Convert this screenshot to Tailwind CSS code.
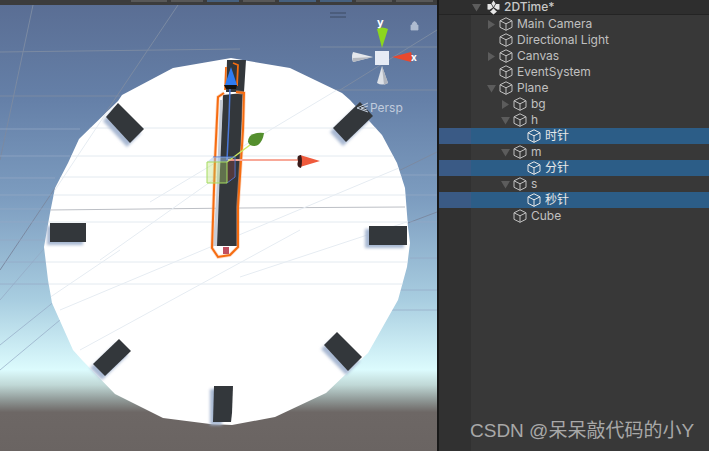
<!DOCTYPE html>
<html><head><meta charset="utf-8"><script src="https://cdn.jsdelivr.net/npm/@tailwindcss/browser@4"></script></head>
<body class="m-0 bg-[#383838]">
<svg width="0" height="0" class="absolute"><defs>
<symbol id="cube" viewBox="0 0 14 14"><path d="M7 .8 13 3.8V10.300L7 13.300 1 10.300V3.800ZM1 3.800 7 6.800 13 3.800M7 6.800V13.300" fill="none" stroke="currentColor" stroke-width="1" stroke-linejoin="round"/></symbol>
<symbol id="tr" viewBox="0 0 9 9"><path d="M1 0 8 4.500 1 9Z" fill="#5c5c5c"/></symbol>
<symbol id="td" viewBox="0 0 9 9"><path d="M0 1H9L4.500 8.500Z" fill="#5c5c5c"/></symbol>
<filter id="soft" x="-20%" y="-20%" width="140%" height="140%"><feGaussianBlur stdDeviation="1.500"/></filter>
<clipPath id="plate"><path d="M231 58 173 68 122 95 118 101 79 139 68 163 55 188 50 213 44 247 48 280 52 303 73 350 82 360 115 394 163 418 210 424 232 425 275 417 326 393 368 353 398 300 407 267 410 243 408 227 405 188 397 163 382 135 350 100 342 93 290 68Z"/></clipPath>
</defs></svg>
<div class="relative flex w-[709px] h-[451px] overflow-hidden font-['Inter','Noto_Sans_CJK_SC',sans-serif] text-[12px] leading-4 text-[#c0c0c0]">
  <!-- Scene view -->
  <div class="w-[437px] h-full shrink-0 flex flex-col">
    <div class="h-[5px] bg-[#3c3c3c] flex gap-[4px] pl-[131px] shrink-0">
      <div class="w-[36px] h-[2px] bg-[#585858]"></div>
      <div class="w-[32px] h-[2px] bg-[#585858]"></div>
      <div class="w-[32px] h-[2px] bg-[#46607e]"></div>
      <div class="w-[32px] h-[2px] bg-[#585858]"></div>
      <div class="w-[37px] h-[2px] bg-[#46607e]"></div>
      <div class="w-[32px] h-[2px] bg-[#46607e]"></div>
      <div class="w-[36px] h-[2px] bg-[#585858]"></div>
      <div class="w-[37px] h-[2px] bg-[#585858]"></div>
    </div>
    <svg width="437" height="446" viewBox="0 5 437 446" class="block">
      <defs>
        <linearGradient id="sky" x1="0" y1="5" x2="0" y2="451" gradientUnits="userSpaceOnUse">
          <stop offset="0" stop-color="#5a6e94"/><stop offset=".213" stop-color="#6580a8"/><stop offset=".437" stop-color="#7d9dc0"/><stop offset=".661" stop-color="#a8cde0"/><stop offset=".818" stop-color="#dcfbfd"/><stop offset=".852" stop-color="#c0d8d6"/><stop offset=".886" stop-color="#8f9896"/><stop offset=".913" stop-color="#6d6765"/><stop offset="1" stop-color="#6a6462"/>
        </linearGradient>
      </defs>
      <rect x="0" y="5" width="437" height="446" fill="url(#sky)"/>
      <g stroke="#7b8aa2" stroke-width="1" fill="none">
        <path d="M0 52 240 49M320 47H437M0 96H120M320 90H437M33 5 0 160M178 5 0 270M437 30 340 90M437 152 380 180M437 212 400 226"/>
      </g>
      <g stroke="#94a9c4" stroke-width="1" fill="none" opacity=".7">
        <path d="M0 129H80M0 156H70M0 178H55M0 195H52M0 209H52M0 222H50M0 240H46M0 262H46M0 284H50M400 175H437M405 195H437M410 222H437M410 258H437M400 290H437M390 310H437M60 230 0 300M75 285 0 345M60 320 0 370"/>
      </g>
      <path d="M231 58 173 68 122 95 118 101 79 139 68 163 55 188 50 213 44 247 48 280 52 303 73 350 82 360 115 394 163 418 210 424 232 425 275 417 326 393 368 353 398 300 407 267 410 243 408 227 405 188 397 163 382 135 350 100 342 93 290 68Z" fill="#fff"/>
      <g clip-path="url(#plate)" fill="none">
        <path d="M80 128H437M68 156H400M56 177H405M52 195H405M49 222H408M46 262H408M48 284H405" stroke="#e3eaf0"/>
        <path d="M48 210 240 208 405 207" stroke="#bcbfc5"/>
        <path d="M178 5 53 193M437 30 150 202M437 152 60 310M437 212 240 277M213 180 100 260M120 250 46 300M300 230 80 350" stroke="#e6ecf2"/>
      </g>
      <g fill="#a8b8d2" filter="url(#soft)">
        <path d="M115 107 141 133 127 147 103 121Z"/><path d="M47 226H83V245H47Z"/><path d="M116 343 128 355 102 380 90 368Z"/><path d="M335 336 360 361 346 375 321 349Z"/><path d="M330 132 357 106 370 120 343 146Z"/><path d="M210 389H222V425H210Z"/><path d="M365 229H404V248H365Z"/>
      </g>
      <g fill="#33373b">
        <path d="M118 103 144 129 130 143 106 117Z"/>
        <path d="M360 102 373 116 346 142 333 128Z"/>
        <path d="M50 223H86V242H50Z"/>
        <path d="M369 226H407V245H369Z"/>
        <path d="M119 339 131 351 105 376 93 364Z"/>
        <path d="M337 332 362 357 348 371 324 345Z"/>
        <path d="M214 386H233L232 413 231 422H213Z"/>
        <path d="M227 60H246L244 92H226Z"/>
      </g>
      <!-- hand -->
      <path d="M223 95 243 93 240 170 237 246H216L219 170Z" fill="#33373b"/>
      <path d="M220 100 216 200 213 246H217L220 170 223 100Z" fill="#c6ccd6"/>
      <path d="M224 93 218 97 215 160 212 248 218 257 230 255 238 247 238 207 243 130 244 93 236 92" fill="none" stroke="#f9b58e" stroke-width="3.500" opacity=".5"/>
      <path d="M224 93 218 97 215 160 212 248 218 257 230 255 238 247 238 207 243 130 244 93 236 92" fill="none" stroke="#f66c10" stroke-width="2"/>
      <path d="M223 247H229V254H223Z" fill="#c05060"/>
      <path d="M226 67 225 90M233 63 238 65 237 86" fill="none" stroke="#f66c10" stroke-width="1.800"/>
      <path d="M230 88 229 120 227 160" stroke="#4a78d8" stroke-width="1.500" fill="none"/>
      <path d="M231 67 237 85H225Z" fill="#2f7cf2"/><path d="M224 85H237L236 89H226Z" fill="#111"/>
      <!-- move gizmo -->
      <path d="M228 160H300" stroke="#f8a898" stroke-width="2"/>
      <path d="M227 162 250 145" stroke="#cbe860" stroke-width="1.500"/>
      <path d="M300 155 320 161 300 167Z" fill="#ef5a3c"/><path d="M301 155Q296 155 298 161 296 167 301 168 303 161 301 155Z" fill="#3a1a18"/>
      <path d="M264 133Q255 132 250 136 246 142 250 145 254 147 258 145 263 141 264 133Z" fill="#548f2e"/>
      <path d="M213 157H235V177L227 183" fill="none" stroke="#4a78d8"/>
      <path d="M235 158V177L227 183V162Z" fill="#b04040" fill-opacity=".25"/>
      <path d="M207 162 213 157H232L227 162Z" fill="#a8c8f0" fill-opacity=".5"/>
      <path d="M207 162H227V183H207Z" fill="#b8e070" fill-opacity=".35" stroke="#a5dc60" stroke-width="1"/>
      <!-- orientation gizmo -->
      <path d="M377 29Q382 26 388 29L382 48Z" fill="#8cd61e"/>
      <path d="M353 52 373 57 353 62Q351 57 353 52Z" fill="#e4e7ec"/><path d="M353 58 373 57 353 62Z" fill="#b4b8c0"/>
      <path d="M411 52 392 57 411 62Q413 57 411 52Z" fill="#e9492e"/>
      <path d="M382 66 388 83Q382 86 377 83Z" fill="#dde1e7"/><path d="M382 66 388 83 384 85Z" fill="#b0b5be"/>
      <rect x="375" y="51" width="14" height="14" fill="#e6ebf5"/>
      <path d="M330 13H346M330 17H346" stroke="#3d4a63"/>
      <path d="M411 25H418V30H411ZM412.500 25V23Q414.500 20 416.500 23V25" fill="#aebbd0" stroke="#aebbd0" stroke-width=".8"/>
      <path d="M368 103 357 108 368 112M368 106 361 108 367 110" stroke="#c6d0de" fill="none"/>
      <text x="370" y="112" font-size="12" fill="#c0cbdc" font-family="Inter">Persp</text>
      <text x="377" y="26" font-size="11" font-weight="700" fill="#fff" font-family="Inter">y</text>
      <text x="411" y="61" font-size="10" font-weight="700" fill="#fff" font-family="Inter">x</text>
    </svg>
  </div>
  <!-- Divider -->
  <div class="w-[2px] h-full bg-[#191919] shrink-0"></div>
  <!-- Hierarchy -->
  <div class="relative flex-1 h-full bg-[#383838]">
    <div class="absolute left-0 top-0 bottom-0 w-[32px] bg-[#313131]"></div>
    <div class="relative flex flex-col">
      <div class="h-[15px] mb-px bg-[#2e2e2e] border-b border-[#242424] flex items-center pl-[33px] font-medium text-[#c8c8c8]">
        <svg class="w-[9px] h-[9px]"><use href="#td"/></svg>
        <svg width="15" height="15" viewBox="0 0 15 15" class="ml-[5px] mr-[3px]"><path d="M7.500 .5 9.500 3.500 7.500 7 5.500 3.500ZM1.500 4 5 4 7 7.500 3.500 9.800 1.500 9.500ZM13.500 4 10 4 8 7.500 11.500 9.800 13.500 9.500ZM7.500 8.200 9.800 10.800 11 11.500 7.500 14.500 4 11.500 5.200 10.800Z" fill="#e6e6e6"/></svg>
        <span>2DTime*</span>
      </div>
      <div class="h-4 flex items-center pl-[48px]"><svg class="w-[9px] h-[9px]"><use href="#tr"/></svg><svg class="w-[14px] h-[14px] ml-[3px] mr-[4px]"><use href="#cube"/></svg>Main Camera</div>
      <div class="h-4 flex items-center pl-[60px]"><svg class="w-[14px] h-[14px] mr-[4px]"><use href="#cube"/></svg>Directional Light</div>
      <div class="h-4 flex items-center pl-[48px]"><svg class="w-[9px] h-[9px]"><use href="#tr"/></svg><svg class="w-[14px] h-[14px] ml-[3px] mr-[4px]"><use href="#cube"/></svg>Canvas</div>
      <div class="h-4 flex items-center pl-[60px]"><svg class="w-[14px] h-[14px] mr-[4px]"><use href="#cube"/></svg>EventSystem</div>
      <div class="h-4 flex items-center pl-[48px]"><svg class="w-[9px] h-[9px]"><use href="#td"/></svg><svg class="w-[14px] h-[14px] ml-[3px] mr-[4px]"><use href="#cube"/></svg>Plane</div>
      <div class="h-4 flex items-center pl-[62px]"><svg class="w-[9px] h-[9px]"><use href="#tr"/></svg><svg class="w-[14px] h-[14px] ml-[3px] mr-[4px]"><use href="#cube"/></svg>bg</div>
      <div class="h-4 flex items-center pl-[62px]"><svg class="w-[9px] h-[9px]"><use href="#td"/></svg><svg class="w-[14px] h-[14px] ml-[3px] mr-[4px]"><use href="#cube"/></svg>h</div>
      <div class="h-4 flex items-center bg-[#2c5d87] text-[#e8e8e8]"><div class="w-[32px] h-4 bg-[#3a5a85] mr-[56px]"></div><svg class="w-[14px] h-[14px] mr-[4px]"><use href="#cube"/></svg>时针</div>
      <div class="h-4 flex items-center pl-[62px]"><svg class="w-[9px] h-[9px]"><use href="#td"/></svg><svg class="w-[14px] h-[14px] ml-[3px] mr-[4px]"><use href="#cube"/></svg>m</div>
      <div class="h-4 flex items-center bg-[#2c5d87] text-[#e8e8e8]"><div class="w-[32px] h-4 bg-[#3a5a85] mr-[56px]"></div><svg class="w-[14px] h-[14px] mr-[4px]"><use href="#cube"/></svg>分针</div>
      <div class="h-4 flex items-center pl-[62px]"><svg class="w-[9px] h-[9px]"><use href="#td"/></svg><svg class="w-[14px] h-[14px] ml-[3px] mr-[4px]"><use href="#cube"/></svg>s</div>
      <div class="h-4 flex items-center bg-[#2c5d87] text-[#e8e8e8]"><div class="w-[32px] h-4 bg-[#3a5a85] mr-[56px]"></div><svg class="w-[14px] h-[14px] mr-[4px]"><use href="#cube"/></svg>秒针</div>
      <div class="h-4 flex items-center pl-[74px]"><svg class="w-[14px] h-[14px] mr-[4px]"><use href="#cube"/></svg>Cube</div>
    </div>
    <div class="absolute left-[31px] top-[418px] whitespace-nowrap font-['Liberation_Sans','Noto_Sans_CJK_SC',sans-serif] text-[19px] leading-[26px] text-[#a8a8a8]">CSDN @呆呆敲代码的小Y</div>
  </div>
</div>
</body></html>
